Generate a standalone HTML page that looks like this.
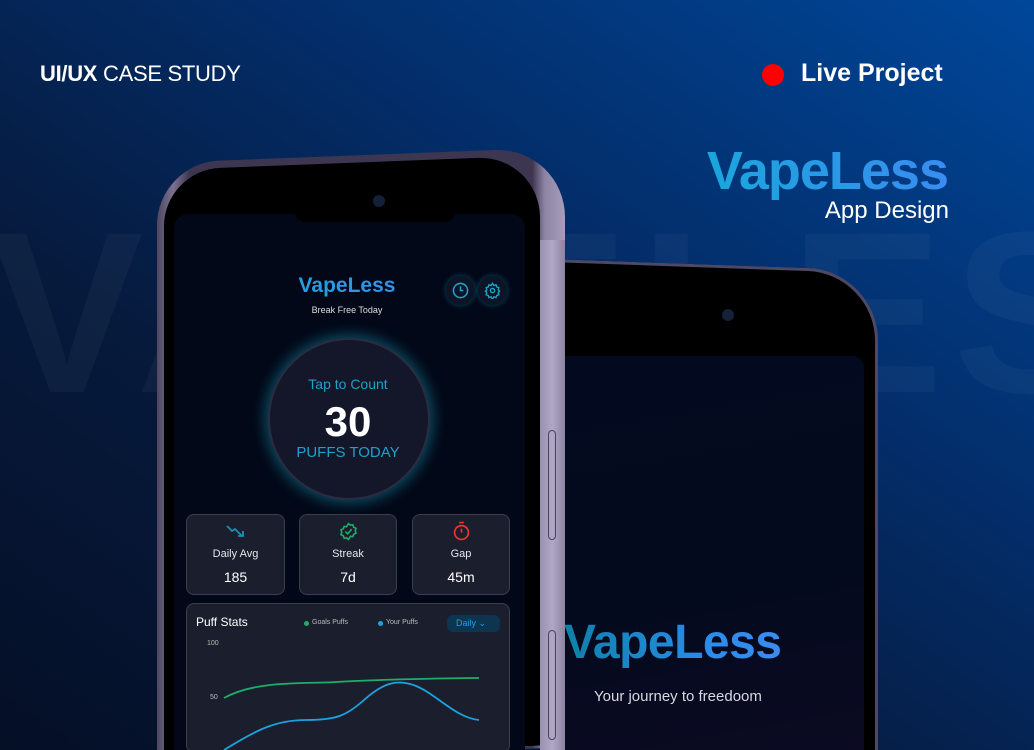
<!DOCTYPE html>
<html><head><meta charset="utf-8"><style>
*{margin:0;padding:0;box-sizing:border-box}
html,body{width:1034px;height:750px;overflow:hidden}
body{font-family:"Liberation Sans",sans-serif;background:#061a3d}
.wrap{position:relative;width:1034px;height:750px;overflow:hidden;background:linear-gradient(215deg,#00479a 0%,#032e6b 35%,#061a3d 65%,#050f26 100%)}
.a{position:absolute}
.wm{left:-10px;top:180px;font-size:230px;font-weight:bold;color:rgba(255,255,255,0.035);letter-spacing:10px;white-space:nowrap}
.c{text-align:center}
.grad{background-image:linear-gradient(90deg,#1aa6dc,#3a8cf0);-webkit-background-clip:text;background-clip:text;color:transparent}
.card{background:#1b1e2d;border:1px solid #3b3e4f;border-radius:8px}
</style></head><body><div class="wrap">
<div class="a wm">VAPELESS</div>
<div class="a" style="left:40px;top:61px;color:#fff;font-size:22px;letter-spacing:-0.3px"><b>UI/UX</b> CASE STUDY</div>
<div class="a" style="left:762px;top:64px;width:22px;height:22px;border-radius:50%;background:#ff0000"></div>
<div class="a" style="left:801px;top:59px;color:#fff;font-size:25px;font-weight:bold">Live Project</div>
<div class="a grad" style="right:86px;top:140px;font-size:54px;font-weight:bold;letter-spacing:-1px">VapeLess</div>
<div class="a" style="right:85px;top:197px;color:#fff;font-size:24px">App Design</div>

<!-- back phone -->
<div class="a" style="left:520px;top:258px;width:358px;height:490px;background:#000;border-radius:0 70px 0 0;border-top:3px solid #4e4864;border-right:3px solid #4e4864;transform:skewY(2deg);transform-origin:left top"></div>
<div class="a" style="left:722px;top:309px;width:12px;height:12px;border-radius:50%;background:#15213a"></div>
<div class="a" style="left:560px;top:356px;width:304px;height:394px;border-radius:0 12px 0 0;background:linear-gradient(170deg,#030a1f,#040a1e 60%,#0b0a22)"></div>
<div class="a grad" style="left:564px;top:615px;font-size:48px;font-weight:bold;letter-spacing:-0.5px;background-image:linear-gradient(90deg,#0f80a8,#2b8ded 70%,#3a8cf0)">VapeLess</div>
<div class="a" style="left:594px;top:688px;color:#d8d8e0;font-size:15px">Your journey to freedoom</div>

<!-- front phone -->
<div class="a" style="left:157px;top:163px;width:408px;height:600px;border-radius:62px 70px 0 0;background:linear-gradient(90deg,#4f4760,#7a7190 4%,#3d3650 8%,#3d3650 92%,#8d84a4 95%,#a79dbc 100%);transform:skewY(-2.2deg);transform-origin:left top"></div>
<div class="a" style="left:540px;top:240px;width:25px;height:510px;background:linear-gradient(90deg,#9a91b0,#b0a7c6 50%,#8c83a2)"></div>
<div class="a" style="left:548px;top:430px;width:8px;height:110px;border-radius:4px;border:1px solid #4a445c"></div>
<div class="a" style="left:548px;top:630px;width:8px;height:110px;border-radius:4px;border:1px solid #4a445c"></div>
<div class="a" style="left:164px;top:170px;width:376px;height:590px;border-radius:56px 62px 0 0;background:#000;transform:skewY(-2.2deg);transform-origin:left top"></div>
<div class="a" style="left:373px;top:195px;width:12px;height:12px;border-radius:50%;background:#14203a"></div>
<div class="a" style="left:174px;top:214px;width:351px;height:536px;border-radius:14px 14px 0 0;background:#020817"></div>
<div class="a" style="left:295px;top:212px;width:160px;height:10px;border-radius:0 0 10px 10px;background:#000"></div>

<div class="a c grad" style="left:247px;top:274px;width:200px;font-size:21px;font-weight:bold">VapeLess</div>
<div class="a c" style="left:247px;top:305px;width:200px;font-size:9px;color:#ddd">Break Free Today</div>
<div class="a" style="left:446px;top:276px;width:29px;height:29px;border-radius:50%;background:#0c1526;box-shadow:0 0 6px #0a4a66"></div>
<svg class="a" style="left:452px;top:282px" width="17" height="17" viewBox="0 0 24 24" fill="none" stroke="#1ba3c6" stroke-width="2.2"><circle cx="12" cy="12" r="10"/><path d="M12 6v6h4"/></svg>
<div class="a" style="left:478px;top:276px;width:29px;height:29px;border-radius:50%;background:#0c1526;box-shadow:0 0 6px #0a4a66"></div>
<svg class="a" style="left:484px;top:282px" width="17" height="17" viewBox="0 0 24 24" fill="none" stroke="#1ba3c6" stroke-width="2"><circle cx="12" cy="12" r="3"/><path d="M12 2l2 3 3-1 1 3 3 1-1 3 2 2-2 2 1 3-3 1-1 3-3-1-2 3-2-3-3 1-1-3-3-1 1-3-2-2 2-2-1-3 3-1 1-3 3 1z"/></svg>

<div class="a" style="left:268px;top:338px;width:162px;height:162px;border-radius:50%;background:#14172a;border:2px solid #2a2c40;box-shadow:0 0 14px 3px rgba(27,163,198,0.45)"></div>
<div class="a c" style="left:248px;top:376px;width:200px;font-size:14px;color:#1ba3c6">Tap to Count</div>
<div class="a c" style="left:248px;top:398px;width:200px;font-size:42px;font-weight:bold;color:#fff">30</div>
<div class="a c" style="left:248px;top:444px;width:200px;font-size:15px;color:#1ba3c6">PUFFS TODAY</div>

<div class="a card" style="left:186px;top:514px;width:99px;height:81px"></div>
<div class="a card" style="left:299px;top:514px;width:98px;height:81px"></div>
<div class="a card" style="left:412px;top:514px;width:98px;height:81px"></div>
<svg class="a" style="left:226px;top:524px" width="19" height="14" viewBox="0 0 19 14" fill="none" stroke="#1b8fb0" stroke-width="1.8"><path d="M1 2l5 5 3-2 7 7M12 12h5V7"/></svg>
<svg class="a" style="left:339px;top:522px" width="19" height="19" viewBox="0 0 24 24" fill="none" stroke="#1fae6a" stroke-width="2"><path d="M12 2l2.5 2 3-.5 1 3 3 1.5-1 3 1 3-3 1.5-1 3-3-.5L12 22l-2.5-2-3 .5-1-3-3-1.5 1-3-1-3 3-1.5 1-3 3 .5z"/><path d="M8 12l3 3 5-6"/></svg>
<svg class="a" style="left:452px;top:521px" width="19" height="20" viewBox="0 0 24 26" fill="none" stroke="#f0322c" stroke-width="2.2"><circle cx="12" cy="15" r="9"/><path d="M9 2h6M12 15V10"/></svg>
<div class="a c" style="left:186px;top:548px;width:99px;font-size:11px;color:#e6e6ea">Daily Avg</div>
<div class="a c" style="left:299px;top:548px;width:98px;font-size:11px;color:#e6e6ea">Streak</div>
<div class="a c" style="left:412px;top:548px;width:98px;font-size:11px;color:#e6e6ea">Gap</div>
<div class="a c" style="left:186px;top:569px;width:99px;font-size:14px;color:#fff">185</div>
<div class="a c" style="left:299px;top:569px;width:98px;font-size:14px;color:#fff">7d</div>
<div class="a c" style="left:412px;top:569px;width:98px;font-size:14px;color:#fff">45m</div>

<div class="a card" style="left:186px;top:603px;width:324px;height:150px"></div>
<div class="a" style="left:196px;top:615px;font-size:12px;color:#fff">Puff Stats</div>
<div class="a" style="left:304px;top:621px;width:5px;height:5px;border-radius:50%;background:#1fae6a"></div>
<div class="a" style="left:312px;top:619px;font-size:7px;color:#bbb">Goals Puffs</div>
<div class="a" style="left:378px;top:621px;width:5px;height:5px;border-radius:50%;background:#1ba3e0"></div>
<div class="a" style="left:386px;top:619px;font-size:7px;color:#bbb">Your Puffs</div>
<div class="a" style="left:447px;top:615px;width:53px;height:17px;border-radius:6px;background:#0e3550;color:#1ba3e0;font-size:9px;padding:3px 0 0 9px">Daily ⌄</div>
<div class="a" style="left:207px;top:640px;font-size:7px;color:#bbb">100</div>
<div class="a" style="left:210px;top:694px;font-size:7px;color:#bbb">50</div>
<svg class="a" style="left:186px;top:640px" width="324" height="110" viewBox="0 0 324 110" fill="none">
<path d="M38 58 C70 40,120 44,150 42 S260 38,293 38" stroke="#1fae6a" stroke-width="1.8"/>
<path d="M38 110 C70 90,90 80,120 80 S160 76,178 60 S210 38,230 46 S270 78,293 80" stroke="#1ba3e0" stroke-width="1.8"/>
</svg>
</div></body></html>
